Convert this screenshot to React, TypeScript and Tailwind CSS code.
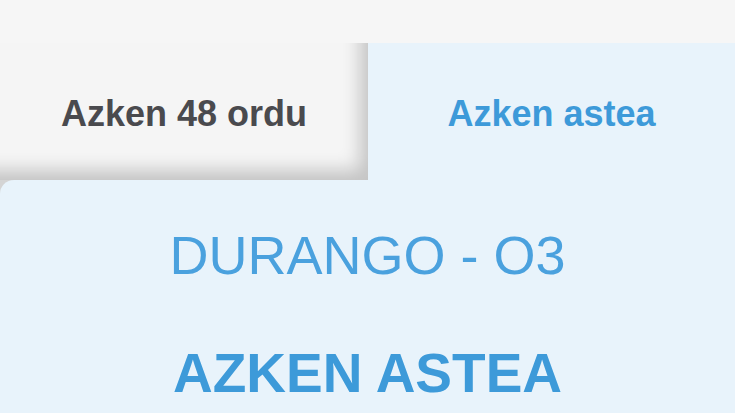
export default function App() {
  return (
    <div
      className="flex h-[413px] w-[735px] flex-col overflow-hidden bg-[#f6f6f6]"
      style={{ fontFamily: '"Liberation Sans", Arial, sans-serif' }}
    >
      <div className="h-[43px] shrink-0 bg-[#f6f6f6]" />
      <div className="flex h-[137px] shrink-0">
        <button className="flex w-[368px] items-center justify-center bg-[#f5f5f5] pt-[4px] text-[36px] font-bold leading-none text-[#4a4a4e] shadow-[inset_-16px_-18px_18px_-8px_rgba(0,0,0,0.2)]">
          Azken 48 ordu
        </button>
        <button className="flex flex-1 items-center justify-center bg-[#e8f3fb] pt-[4px] text-[36px] font-bold leading-none text-[#3d9ad9]">
          Azken astea
        </button>
      </div>
      <div className="flex-1 bg-[linear-gradient(to_right,#d4d4d4_0,#d4d4d4_368px,#e8f3fb_368px)]">
        <div className="flex h-full flex-col items-center rounded-tl-[14px] bg-[#e8f3fb] pt-[48px]">
          <h2 className="text-[54px] leading-none text-[#4aa1de]">DURANGO - O3</h2>
          <h3 className="mt-[64px] text-[55px] font-bold leading-none text-[#3d9ad9]">AZKEN ASTEA</h3>
        </div>
      </div>
    </div>
  );
}
